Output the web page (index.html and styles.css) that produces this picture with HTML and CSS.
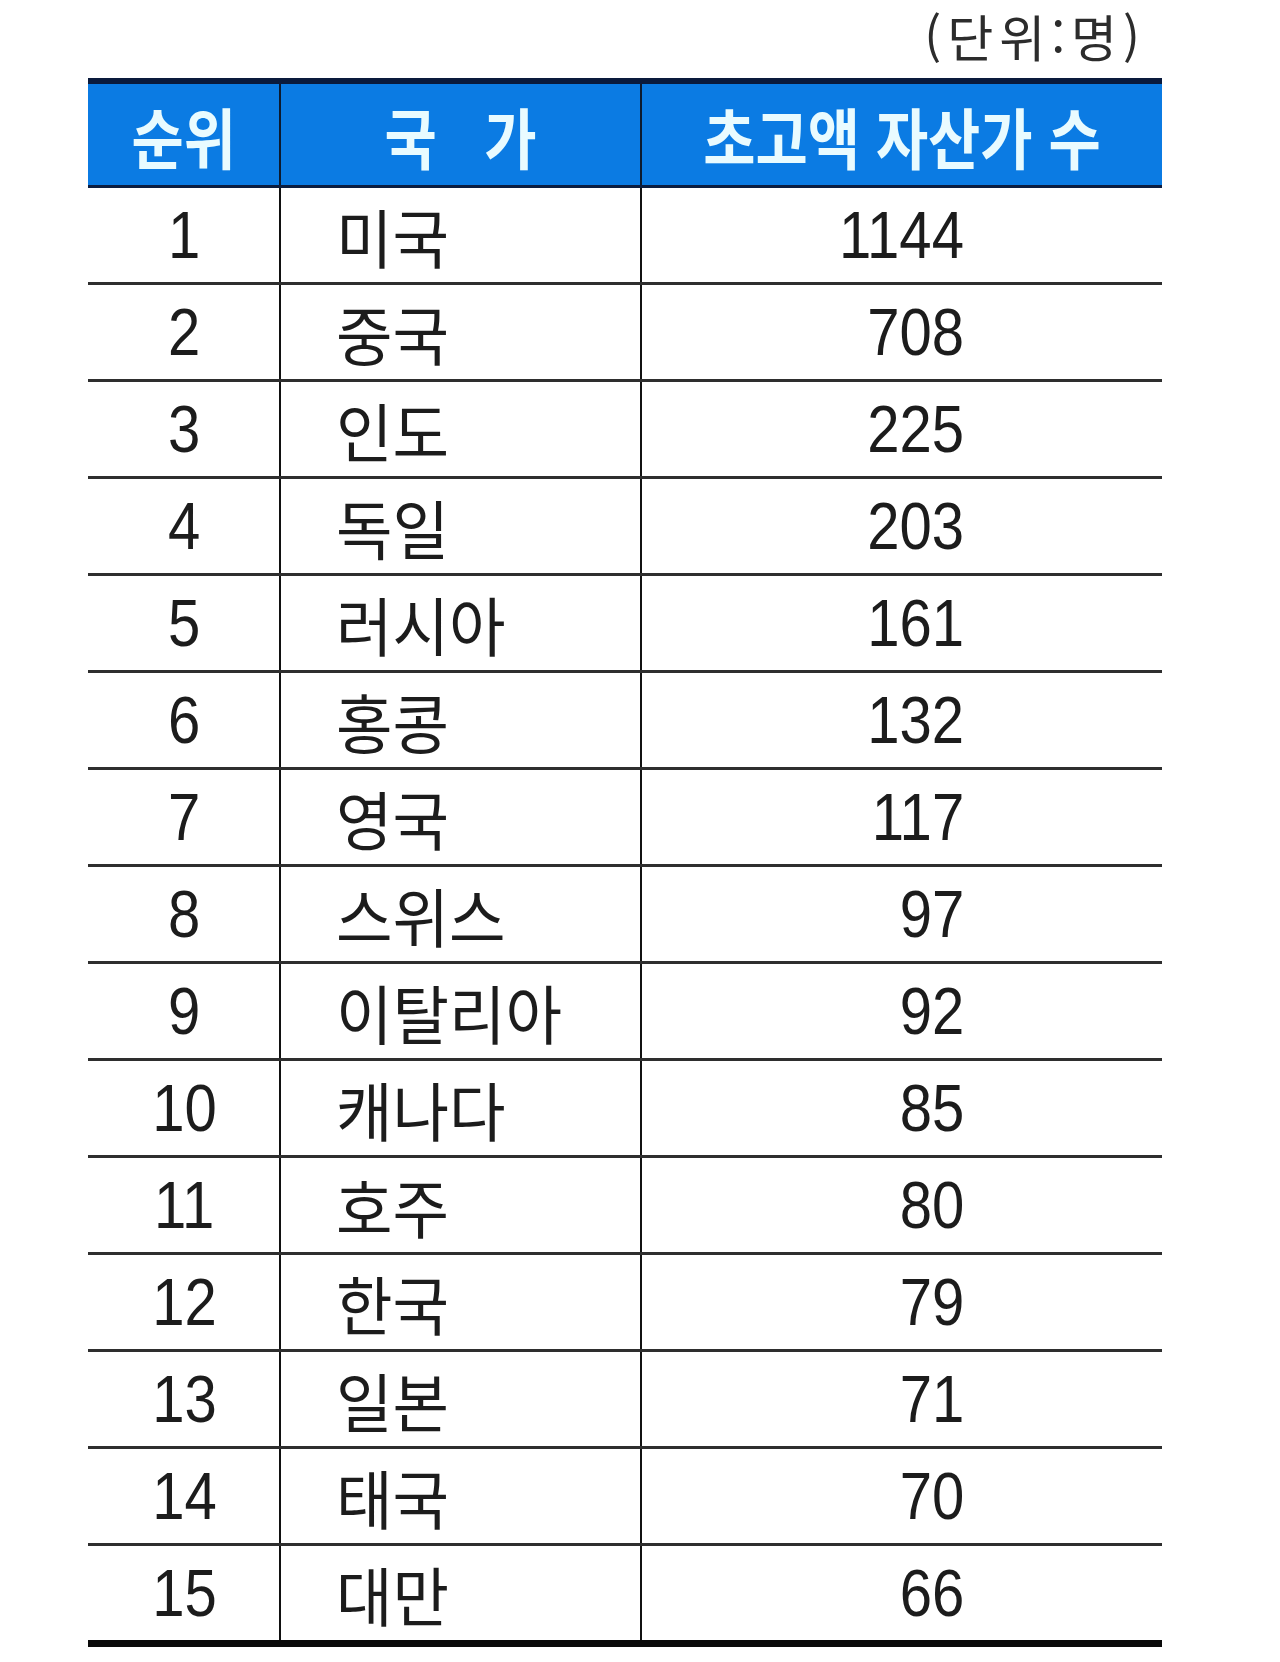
FILE: index.html
```html
<!DOCTYPE html>
<html lang="ko">
<head>
<meta charset="utf-8">
<title>초고액 자산가 수</title>
<link rel="stylesheet" href="styles.css">
</head>
<body>
<div class="wrap">
  <div class="unit"><span class="unit-txt">(단위:명)</span></div>
  <table class="tbl">
    <colgroup><col class="c1"><col class="c2"><col class="c3"></colgroup>
    <thead>
      <tr><th><span class="hd">순위</span></th><th><span class="hd">국&nbsp;&nbsp;&nbsp;가</span></th><th><span class="hd">초고액 자산가 수</span></th></tr>
    </thead>
    <tbody>
      <tr><td class="rank"><span class="num">1</span></td><td class="ctry"><span class="kr">미국</span></td><td class="val"><span class="num">1144</span></td></tr>
      <tr><td class="rank"><span class="num">2</span></td><td class="ctry"><span class="kr">중국</span></td><td class="val"><span class="num">708</span></td></tr>
      <tr><td class="rank"><span class="num">3</span></td><td class="ctry"><span class="kr">인도</span></td><td class="val"><span class="num">225</span></td></tr>
      <tr><td class="rank"><span class="num">4</span></td><td class="ctry"><span class="kr">독일</span></td><td class="val"><span class="num">203</span></td></tr>
      <tr><td class="rank"><span class="num">5</span></td><td class="ctry"><span class="kr">러시아</span></td><td class="val"><span class="num">161</span></td></tr>
      <tr><td class="rank"><span class="num">6</span></td><td class="ctry"><span class="kr">홍콩</span></td><td class="val"><span class="num">132</span></td></tr>
      <tr><td class="rank"><span class="num">7</span></td><td class="ctry"><span class="kr">영국</span></td><td class="val"><span class="num">117</span></td></tr>
      <tr><td class="rank"><span class="num">8</span></td><td class="ctry"><span class="kr">스위스</span></td><td class="val"><span class="num">97</span></td></tr>
      <tr><td class="rank"><span class="num">9</span></td><td class="ctry"><span class="kr">이탈리아</span></td><td class="val"><span class="num">92</span></td></tr>
      <tr><td class="rank"><span class="num">10</span></td><td class="ctry"><span class="kr">캐나다</span></td><td class="val"><span class="num">85</span></td></tr>
      <tr><td class="rank"><span class="num">11</span></td><td class="ctry"><span class="kr">호주</span></td><td class="val"><span class="num">80</span></td></tr>
      <tr><td class="rank"><span class="num">12</span></td><td class="ctry"><span class="kr">한국</span></td><td class="val"><span class="num">79</span></td></tr>
      <tr><td class="rank"><span class="num">13</span></td><td class="ctry"><span class="kr">일본</span></td><td class="val"><span class="num">71</span></td></tr>
      <tr><td class="rank"><span class="num">14</span></td><td class="ctry"><span class="kr">태국</span></td><td class="val"><span class="num">70</span></td></tr>
      <tr><td class="rank"><span class="num">15</span></td><td class="ctry"><span class="kr">대만</span></td><td class="val"><span class="num">66</span></td></tr>
    </tbody>
  </table>
</div>
</body>
</html>
```

FILE: styles.css
```css
html, body {
  margin: 0;
  padding: 0;
  background: #ffffff;
}
body {
  font-family: "Liberation Sans", "Noto Sans CJK KR", sans-serif;
  color: #1a1a1a;
}
.wrap {
  width: 1074px;
  margin-left: 88px;
}
.unit {
  height: 78px;
  display: flex;
  justify-content: flex-end;
  align-items: flex-start;
  padding-right: 16px;
  box-sizing: border-box;
}
.unit-txt {
  font-family: "Noto Sans CJK KR", sans-serif;
  font-size: 50px;
  line-height: 70px;
  letter-spacing: 6px;
  color: #2c2c2c;
  white-space: nowrap;
}
.tbl {
  width: 1074px;
  border-collapse: collapse;
  table-layout: fixed;
}
.c1 { width: 192px; }
.c2 { width: 361px; }
.c3 { width: 521px; }
.tbl th {
  background: #0b7be3;
  color: #e9fbff;
  font-family: "Noto Sans CJK KR", sans-serif;
  font-weight: 700;
  font-size: 66px;
  height: 101px;
  padding: 0;
  border-top: 6px solid #0a1a3c;
  border-bottom: 3px solid #0b1d40;
  border-left: 2px solid #0d1a2e;
  text-align: center;
  line-height: 1;
}
.tbl th:first-child { border-left: none; }
.hd {
  display: inline-block;
  transform: scaleX(0.86);
  transform-origin: center center;
  white-space: nowrap;
}
.tbl td {
  height: 94px;
  padding: 0;
  border-bottom: 3px solid #2e2e2e;
  border-left: 2px solid #111111;
  vertical-align: middle;
  line-height: 1;
}
.tbl td:first-child { border-left: none; }
.tbl tbody tr:last-child td { border-bottom: 7px solid #0a0a0a; }
.num {
  display: inline-block;
  font-family: "Liberation Sans", sans-serif;
  font-size: 66px;
  color: #1c1c1c;
  transform: scaleX(0.88);
}
.rank {
  text-align: center;
}
.rank .num { transform-origin: center center; padding-left: 2px; }
.ctry {
  padding-left: 55px !important;
}
.kr {
  display: inline-block;
  font-family: "Noto Sans CJK KR", sans-serif;
  font-size: 64px;
  color: #1c1c1c;
  transform: scaleX(0.96);
  transform-origin: left center;
  white-space: nowrap;
}
.val {
  text-align: right;
  padding-right: 198px !important;
}
.val .num { transform-origin: right center; }
```
